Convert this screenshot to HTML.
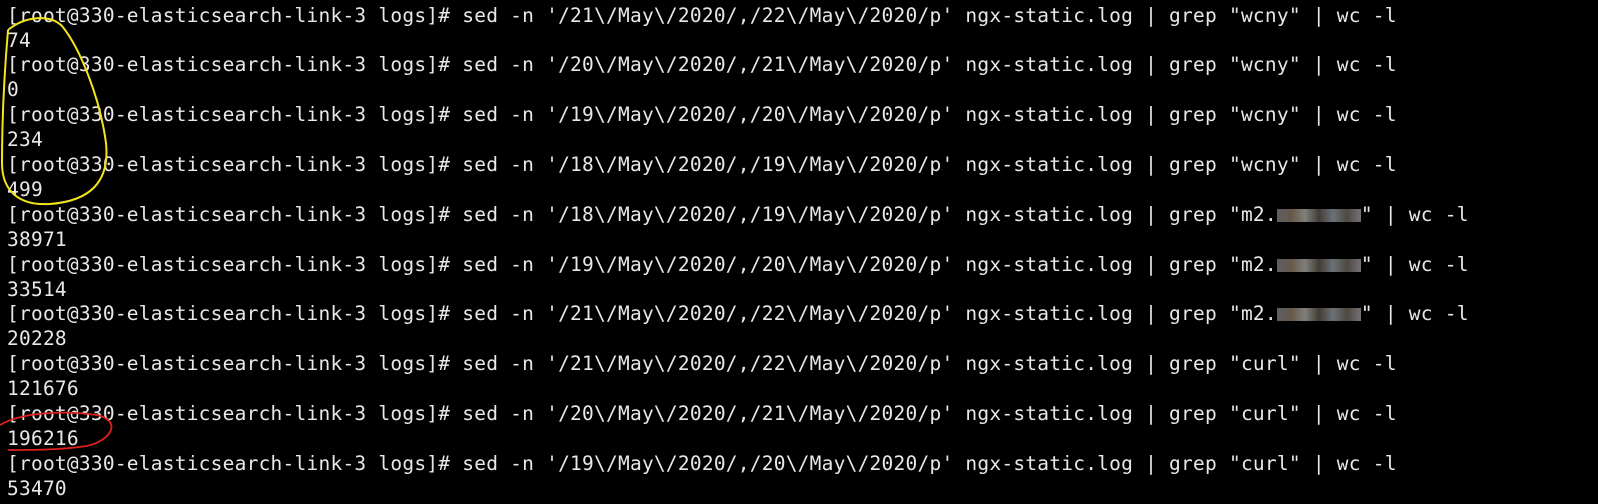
<!DOCTYPE html>
<html><head><style>
html,body{margin:0;padding:0;background:#000;width:1598px;height:504px;overflow:hidden;position:relative}
div.l{position:absolute;left:7px;margin:0;white-space:pre;font-family:"DejaVu Sans Mono","Liberation Mono",monospace;font-size:19.5px;line-height:24px;letter-spacing:0.24px;color:#e8e8e8}
.b{display:inline-block;width:84px;height:13px;vertical-align:-1px;background:linear-gradient(90deg,#7a7f88,#8a7560,#a9a9a2,#5a5048,#8e98a0,#6a6055,#9a96a0);opacity:.75}
svg{position:absolute;left:0;top:0}
</style></head><body>
<div class="l" style="top:3.6px">[root@330-elasticsearch-link-3 logs]# sed -n '/21\/May\/2020/,/22\/May\/2020/p' ngx-static.log | grep "wcny" | wc -l</div>
<div class="l" style="top:28.5px">74</div>
<div class="l" style="top:53.4px">[root@330-elasticsearch-link-3 logs]# sed -n '/20\/May\/2020/,/21\/May\/2020/p' ngx-static.log | grep "wcny" | wc -l</div>
<div class="l" style="top:78.3px">0</div>
<div class="l" style="top:103.2px">[root@330-elasticsearch-link-3 logs]# sed -n '/19\/May\/2020/,/20\/May\/2020/p' ngx-static.log | grep "wcny" | wc -l</div>
<div class="l" style="top:128.1px">234</div>
<div class="l" style="top:153px">[root@330-elasticsearch-link-3 logs]# sed -n '/18\/May\/2020/,/19\/May\/2020/p' ngx-static.log | grep "wcny" | wc -l</div>
<div class="l" style="top:177.9px">499</div>
<div class="l" style="top:202.8px">[root@330-elasticsearch-link-3 logs]# sed -n '/18\/May\/2020/,/19\/May\/2020/p' ngx-static.log | grep "m2.<span class="b"></span>" | wc -l</div>
<div class="l" style="top:227.7px">38971</div>
<div class="l" style="top:252.6px">[root@330-elasticsearch-link-3 logs]# sed -n '/19\/May\/2020/,/20\/May\/2020/p' ngx-static.log | grep "m2.<span class="b"></span>" | wc -l</div>
<div class="l" style="top:277.5px">33514</div>
<div class="l" style="top:302.4px">[root@330-elasticsearch-link-3 logs]# sed -n '/21\/May\/2020/,/22\/May\/2020/p' ngx-static.log | grep "m2.<span class="b"></span>" | wc -l</div>
<div class="l" style="top:327.3px">20228</div>
<div class="l" style="top:352.2px">[root@330-elasticsearch-link-3 logs]# sed -n '/21\/May\/2020/,/22\/May\/2020/p' ngx-static.log | grep "curl" | wc -l</div>
<div class="l" style="top:377.1px">121676</div>
<div class="l" style="top:402px">[root@330-elasticsearch-link-3 logs]# sed -n '/20\/May\/2020/,/21\/May\/2020/p' ngx-static.log | grep "curl" | wc -l</div>
<div class="l" style="top:426.9px">196216</div>
<div class="l" style="top:451.8px">[root@330-elasticsearch-link-3 logs]# sed -n '/19\/May\/2020/,/20\/May\/2020/p' ngx-static.log | grep "curl" | wc -l</div>
<div class="l" style="top:476.7px">53470</div>
<svg width="1598" height="504">
<path d="M8,30 C25,16 50,14 62,26 C80,48 100,98 106,143 C110,182 90,201 50,204 C18,206 2,190 2,163 C2,122 4,77 8,30" fill="none" stroke="#f2e51c" stroke-width="2"/>
<path d="M0,425 C20,413 60,410 97,415 C122,421 112,440 87,446 C60,450 30,450 8,450" fill="none" stroke="#e0201c" stroke-width="1.8"/>
</svg>
</body></html>
